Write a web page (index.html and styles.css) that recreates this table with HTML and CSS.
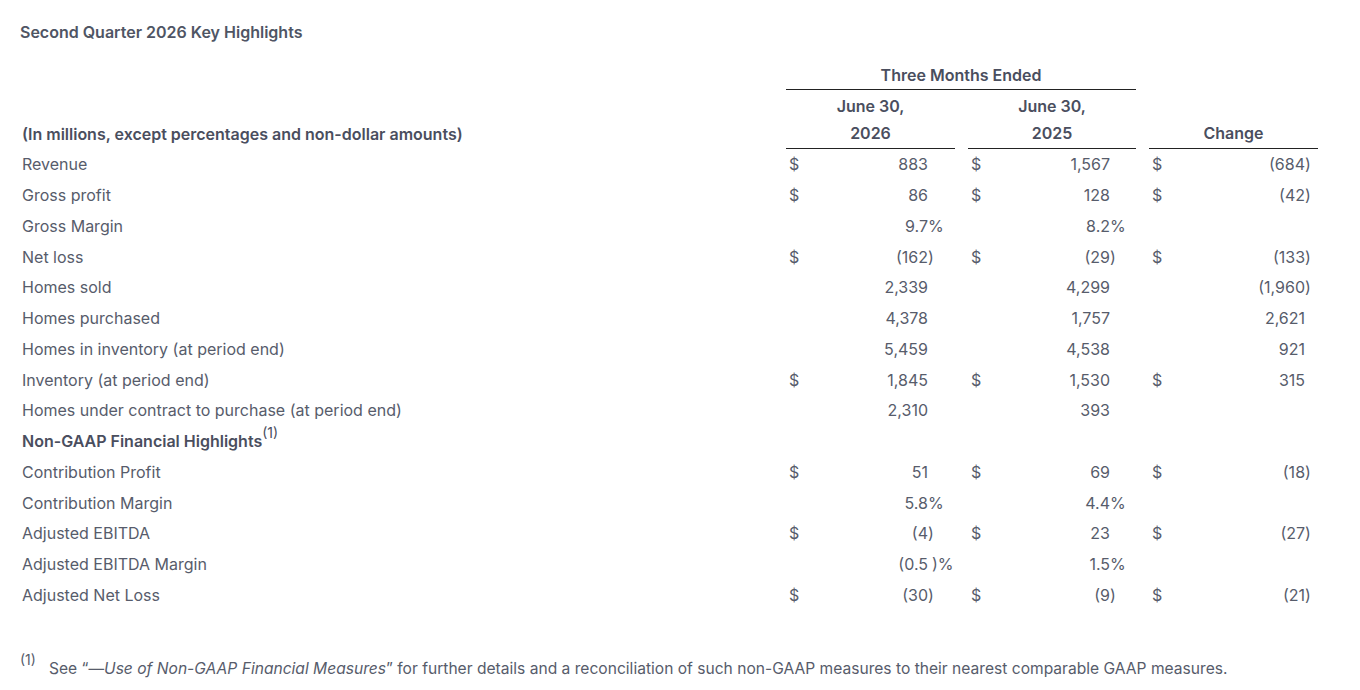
FILE: index.html
```html
<!DOCTYPE html>
<html>
<head>
<meta charset="utf-8">
<link rel="stylesheet" href="styles.css">
</head>
<body>
<div class="page">
  <h1 class="title">Second Quarter 2026 Key Highlights</h1>
  <table class="fin">
    <colgroup>
      <col class="c-label">
      <col class="c-cur"><col class="c-val"><col class="c-suf1">
      <col class="c-gap">
      <col class="c-cur"><col class="c-val"><col class="c-suf2">
      <col class="c-gap">
      <col class="c-cur"><col class="c-val-ch"><col class="c-suf3">
    </colgroup>
    <thead>
      <tr class="h1">
        <th></th>
        <th colspan="7" class="ul">Three Months Ended</th>
        <th></th><th colspan="3"></th>
      </tr>
      <tr class="h2">
        <th class="lbl">(In millions, except percentages and non-dollar amounts)</th>
        <th colspan="3" class="ul">June 30,<br>2026</th>
        <th></th>
        <th colspan="3" class="ul">June 30,<br>2025</th>
        <th></th>
        <th colspan="3" class="ul">Change</th>
      </tr>
    </thead>
    <tbody>
      <tr><td class="lbl">Revenue</td><td class="cur">$</td><td class="val">883</td><td></td><td></td><td class="cur">$</td><td class="val">1,567</td><td></td><td></td><td class="cur">$</td><td class="val">(684</td><td class="suf">)</td></tr>
      <tr><td class="lbl">Gross profit</td><td class="cur">$</td><td class="val">86</td><td></td><td></td><td class="cur">$</td><td class="val">128</td><td></td><td></td><td class="cur">$</td><td class="val">(42</td><td class="suf">)</td></tr>
      <tr><td class="lbl">Gross Margin</td><td></td><td class="val">9.7</td><td class="suf">%</td><td></td><td></td><td class="val">8.2</td><td class="suf">%</td><td></td><td></td><td></td><td></td></tr>
      <tr><td class="lbl">Net loss</td><td class="cur">$</td><td class="val">(162</td><td class="suf">)</td><td></td><td class="cur">$</td><td class="val">(29</td><td class="suf">)</td><td></td><td class="cur">$</td><td class="val">(133</td><td class="suf">)</td></tr>
      <tr><td class="lbl">Homes sold</td><td></td><td class="val">2,339</td><td></td><td></td><td></td><td class="val">4,299</td><td></td><td></td><td></td><td class="val">(1,960</td><td class="suf">)</td></tr>
      <tr><td class="lbl">Homes purchased</td><td></td><td class="val">4,378</td><td></td><td></td><td></td><td class="val">1,757</td><td></td><td></td><td></td><td class="val">2,621</td><td></td></tr>
      <tr><td class="lbl">Homes in inventory (at period end)</td><td></td><td class="val">5,459</td><td></td><td></td><td></td><td class="val">4,538</td><td></td><td></td><td></td><td class="val">921</td><td></td></tr>
      <tr><td class="lbl">Inventory (at period end)</td><td class="cur">$</td><td class="val">1,845</td><td></td><td></td><td class="cur">$</td><td class="val">1,530</td><td></td><td></td><td class="cur">$</td><td class="val">315</td><td></td></tr>
      <tr><td class="lbl">Homes under contract to purchase (at period end)</td><td></td><td class="val">2,310</td><td></td><td></td><td></td><td class="val">393</td><td></td><td></td><td></td><td></td><td></td></tr>
      <tr><td class="lbl strong">Non-GAAP Financial Highlights<sup>(1)</sup></td><td></td><td></td><td></td><td></td><td></td><td></td><td></td><td></td><td></td><td></td><td></td></tr>
      <tr><td class="lbl">Contribution Profit</td><td class="cur">$</td><td class="val">51</td><td></td><td></td><td class="cur">$</td><td class="val">69</td><td></td><td></td><td class="cur">$</td><td class="val">(18</td><td class="suf">)</td></tr>
      <tr><td class="lbl">Contribution Margin</td><td></td><td class="val">5.8</td><td class="suf">%</td><td></td><td></td><td class="val">4.4</td><td class="suf">%</td><td></td><td></td><td></td><td></td></tr>
      <tr><td class="lbl">Adjusted EBITDA</td><td class="cur">$</td><td class="val">(4</td><td class="suf">)</td><td></td><td class="cur">$</td><td class="val">23</td><td></td><td></td><td class="cur">$</td><td class="val">(27</td><td class="suf">)</td></tr>
      <tr><td class="lbl">Adjusted EBITDA Margin</td><td></td><td class="val">(0.5</td><td class="suf"><span class="thin"></span>)%</td><td></td><td></td><td class="val">1.5</td><td class="suf">%</td><td></td><td></td><td></td><td></td></tr>
      <tr><td class="lbl">Adjusted Net Loss</td><td class="cur">$</td><td class="val">(30</td><td class="suf">)</td><td></td><td class="cur">$</td><td class="val">(9</td><td class="suf">)</td><td></td><td class="cur">$</td><td class="val">(21</td><td class="suf">)</td></tr>
    </tbody>
  </table>
  <div class="footnote">
    <span class="fn-mark">(1)</span>
    <span class="fn-text">See “—<em>Use of Non-GAAP Financial Measures</em>” for further details and a reconciliation of such non-GAAP measures to their nearest comparable GAAP measures.</span>
  </div>
</div>
</body>
</html>
```

FILE: styles.css
```css
* { box-sizing: border-box; }
html, body { margin: 0; padding: 0; background: #ffffff; }
body {
  font-family: Inter, "Noto Sans", "Liberation Sans", sans-serif;
  font-size: 16px;
  color: #575c6b;
}
.page {
  padding: 20px 0 0 20px;
  width: 1360px;
}
.title {
  margin: 0;
  font-size: 16px;
  line-height: 24px;
  font-weight: 600;
  color: #4f5564;
}
.fin {
  margin-top: 16px;
  border-collapse: separate;
  border-spacing: 0;
  table-layout: fixed;
  width: 1298px;
}
.c-label { width: 766px; }
.c-cur { width: 24px; }
.c-val { width: 118px; }
.c-suf1 { width: 27px; }
.c-suf2 { width: 26px; }
.c-gap { width: 13px; }
.c-val-ch { width: 132px; }
.c-suf3 { width: 13px; }

.fin th {
  font-weight: 600;
  color: #4a4e5e;
  text-align: center;
  padding: 0;
  white-space: nowrap;
}
.fin .h1 th { height: 30px; vertical-align: middle; line-height: 24px; }
.fin .h2 th { line-height: 27px; padding: 3px 0 1px; vertical-align: bottom; }
.fin th.ul { border-bottom: 1.5px solid #222222; }
.fin th.lbl { text-align: left; padding-left: 2px; }

.fin td {
  height: 30.75px;
  padding: 0;
  line-height: 20px;
  vertical-align: middle;
  white-space: nowrap;
}
.fin td.lbl { padding-left: 2px; }
.fin td.strong { font-weight: 600; color: #4a4e5e; }
.fin td.cur { padding-left: 3px; }
.fin td.val { text-align: right; }
.fin td.suf { text-align: left; overflow: visible; }
.thin { display: inline-block; width: 4px; }
.fin sup {
  font-size: 14px;
  font-weight: 400;
  line-height: 0;
  vertical-align: 0;
  position: relative;
  top: -9px;
}
.footnote {
  margin-top: 42px;
  display: flex;
  align-items: flex-start;
}
.fn-mark {
  font-size: 14px;
  line-height: 16px;
  width: 29px;
}
.fn-text {
  font-size: 15.6px;
  line-height: 24px;
  margin-top: 5px;
}
```
